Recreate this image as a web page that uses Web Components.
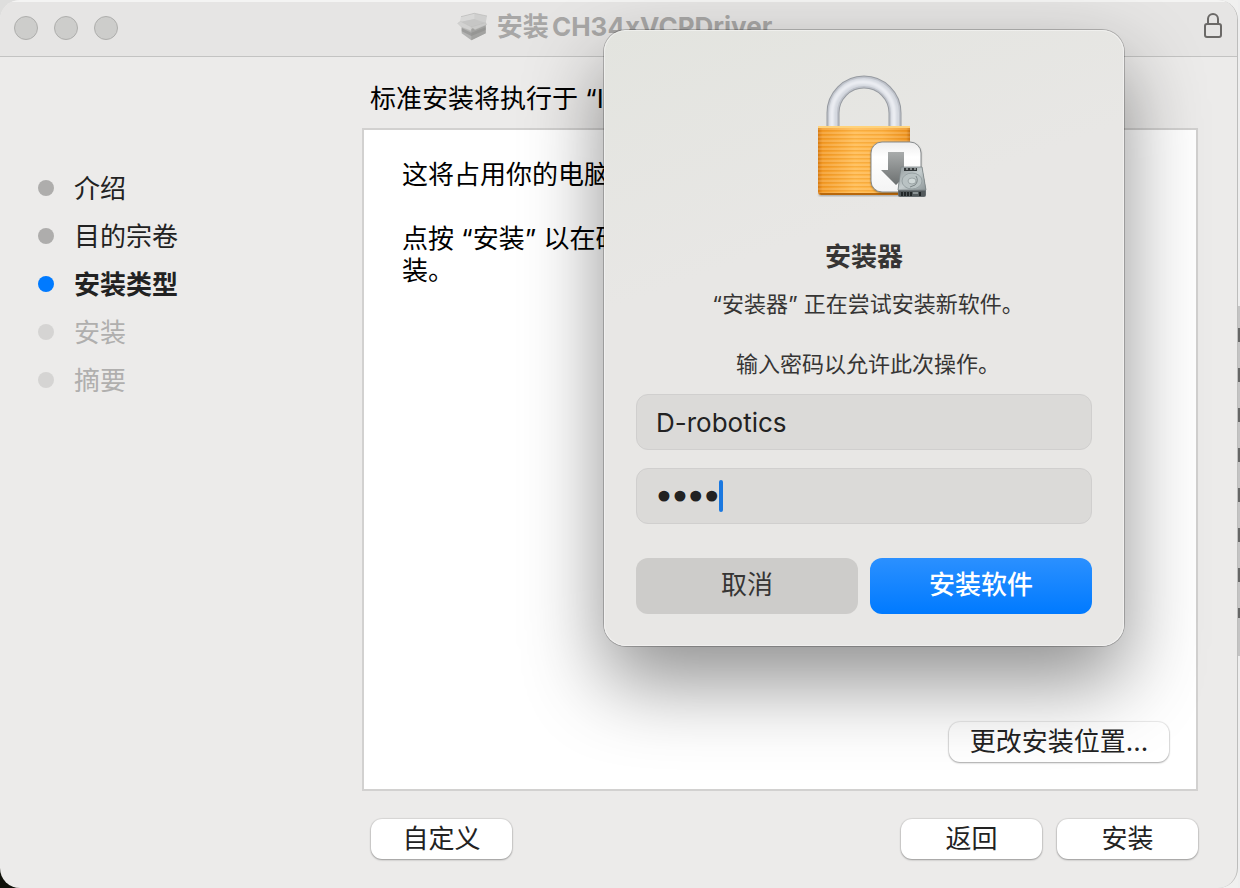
<!DOCTYPE html>
<html lang="zh-CN">
<head>
<meta charset="utf-8">
<meta name="viewport" content="width=device-width, initial-scale=1">
<title>安装 CH34xVCPDriver</title>
<style>
  * { box-sizing: border-box; }
  body {
    margin: 0;
    min-height: 100vh;
    display: flex;
    position: relative;
    overflow: hidden;
    background: #eee;
    font: 26px/32px Inter, "Noto Sans CJK SC", sans-serif;
    color: #222;
  }
  installer-window { flex: 1; }
</style>
</head>
<body>

<installer-window>
  <title-bar slot="title">安装CH34xVCPDriver</title-bar>

  <step-list slot="steps">
    <step-item state="done">介绍</step-item>
    <step-item state="done">目的宗卷</step-item>
    <step-item state="current">安装类型</step-item>
    <step-item>安装</step-item>
    <step-item>摘要</step-item>
  </step-list>

  <install-pane slot="content">
    <span slot="heading">标准安装将执行于 “I</span>
    <p>这将占用你的电脑</p>
    <p>点按 “安装” 以在硬<br>装。</p>
    <push-button slot="action" wide>更改安装位置...</push-button>
  </install-pane>

  <push-button slot="custom">自定义</push-button>
  <push-button slot="nav">返回</push-button>
  <push-button slot="nav">安装</push-button>
</installer-window>

<auth-dialog user="D-robotics" password="1234">
  <padlock-icon slot="icon"></padlock-icon>
  <span slot="title">安装器</span>
  <span slot="message">“安装器” 正在尝试安装新软件。</span>
  <span slot="prompt">输入密码以允许此次操作。</span>
  <span slot="cancel">取消</span>
  <span slot="confirm">安装软件</span>
</auth-dialog>

<script>
class InstallerWindow extends HTMLElement {
  constructor() {
    super();
    this.attachShadow({ mode: "open" }).innerHTML = `
      <style>
        * { box-sizing: border-box; }
        :host {
          display: flex;
          background:
            linear-gradient(#dededd 0 50%, #10110a 50%) 0 0 / 50% 100% no-repeat,
            #f0f0ef;
        }
        .window {
          flex: 1;
          display: flex;
          flex-direction: column;
          background: #ecebea;
          border-radius: 20px;
          overflow: hidden;
          border-right: 1px solid #bdbdbc;
        }
        .body { flex: 1; display: grid; grid-template-columns: 362px 1fr; }
        .main {
          display: flex;
          flex-direction: column;
          padding: 26px 39px 29px 0;
        }
        slot[name=content]::slotted(*) { flex: 1; }
        footer { display: flex; gap: 15px; padding: 28px 0 0 9px; }
        .space { flex: 1; }
        /* sliver of the page behind the window */
        .behind {
          width: 2px;
          background:
            repeating-linear-gradient(#666 0 14px, transparent 14px 40px) 0 328px / 2px 290px no-repeat,
            linear-gradient(#c4c4c4, #c4c4c4) 0 306px / 2px 350px no-repeat,
            #eee;
        }
      </style>
      <div class="window">
        <slot name="title"></slot>
        <div class="body">
          <slot name="steps"></slot>
          <div class="main">
            <slot name="content"></slot>
            <footer>
              <slot name="custom"></slot>
              <div class="space"></div>
              <slot name="nav"></slot>
            </footer>
          </div>
        </div>
      </div>
      <div class="behind"></div>
    `;
  }
}

class TitleBar extends HTMLElement {
  constructor() {
    super();
    this.attachShadow({ mode: "open" }).innerHTML = `
      <style>
        * { box-sizing: border-box; }
        :host {
          display: grid;
          grid-template-columns: 1fr auto 1fr;
          align-items: center;
          box-sizing: border-box;
          height: 57px;
          padding: 0 14px;
          background: linear-gradient(#f4f4f3 0 2px, #e6e5e4 2px);
          border-bottom: 1px solid #c3c3c2;
          text-autospace: normal;
        }
        .lights { display: flex; gap: 16px; }
        .lights button {
          width: 24px;
          height: 24px;
          padding: 0;
          border: 1px solid #aeaeac;
          border-radius: 50%;
          background: #cdcdcb;
        }
        h1 {
          display: flex;
          align-items: center;
          gap: 10px;
          margin: 0;
          padding: 0 8px 2px 0;
          font-size: 26px;
          font-weight: 700;
          color: #a8a7a6;
        }
        .lock { justify-self: end; }
        svg { display: block; }
      </style>
      <div class="lights">
        <button type="button" aria-label="关闭"></button>
        <button type="button" aria-label="最小化"></button>
        <button type="button" aria-label="缩放"></button>
      </div>
      <h1>
        <svg width="30" height="30" viewBox="0 0 90 90" aria-hidden="true">
          <path d="M14 36 43 50 86 36V64L43 85 14 64Z" fill="#b2b2b1"/>
          <path d="M43 50 86 36V64L43 85Z" fill="#a2a2a0"/>
          <path d="M14 48 43 62 86 46V54L43 72 14 58Z" fill="#8e8e8c" opacity=".6"/>
          <path d="M12 14 52 4 90 12 86 34 42 47 10 30Z" fill="#cfcfce"/>
          <path d="M12 14 52 4V22L12 30Z" fill="#d8d8d7"/>
          <path d="M12 14 52 4 90 12" fill="none" stroke="#b9b9b8" stroke-width="2"/>
          <path d="M12 29 52 21 86 33 42 46Z" fill="#c6c6c5"/>
          <path d="M10 28 2 34 14 46 42 56 43 45Z" fill="#d2d2d1" stroke="#bbbbba"/>
          <path d="M43 45 86 32 89 38 54 53Z" fill="#cacac9" stroke="#b5b5b4"/>
        </svg>
        <slot></slot>
      </h1>
      <svg class="lock" width="20" height="32" viewBox="0 0 20 32" fill="none" stroke="#6b6967" stroke-width="2" aria-hidden="true">
        <rect x="2" y="12" width="16" height="13" rx="2"/>
        <path d="M5 12V7a5 5 0 0 1 10 0v5"/>
      </svg>
    `;
  }
}

class StepList extends HTMLElement {
  constructor() {
    super();
    this.attachShadow({ mode: "open" }).innerHTML = `
      <style>
        :host {
          display: flex;
          flex-direction: column;
          padding: 107px 16px 0 38px;
        }
      </style>
      <slot></slot>
    `;
  }
}

class StepItem extends HTMLElement {
  constructor() {
    super();
    this.attachShadow({ mode: "open" }).innerHTML = `
      <style>
        :host {
          display: flex;
          align-items: center;
          gap: 20px;
          height: 48px;
          color: #b0afae;
          --dot: #d5d4d3;
        }
        :host([state=done]) { color: #222; --dot: #aeadac; }
        :host([state=current]) { color: #222; font-weight: 700; --dot: #007aff; }
        i { width: 16px; height: 16px; border-radius: 50%; background: var(--dot); }
        span { padding-top: 2px; }
      </style>
      <i></i><span><slot></slot></span>
    `;
  }
}

class InstallPane extends HTMLElement {
  constructor() {
    super();
    this.attachShadow({ mode: "open" }).innerHTML = `
      <style>
        :host { display: flex; flex-direction: column; color: #000; }
        header { padding: 0 0 13px 8px; white-space: nowrap; }
        .box {
          flex: 1;
          display: flex;
          flex-direction: column;
          padding: 29px 27px 27px 38px;
          background: #fff;
          border: 2px solid #d2d1d0;
        }
        .text { flex: 1; }
        ::slotted(p) { margin: 0 0 32px; }
        .action { align-self: flex-end; }
      </style>
      <header><slot name="heading"></slot></header>
      <div class="box">
        <div class="text"><slot></slot></div>
        <div class="action"><slot name="action"></slot></div>
      </div>
    `;
  }
}

class PushButton extends HTMLElement {
  constructor() {
    super();
    this.attachShadow({ mode: "open" }).innerHTML = `
      <style>
        :host { display: block; }
        button {
          display: block;
          min-width: 141px;
          height: 40px;
          padding: 0 20px 1px;
          border: 0;
          border-radius: 11px;
          background: #fff;
          box-shadow: 0 0 1px 1px rgba(0, 0, 0, .08), 0 1px 2px rgba(0, 0, 0, .3);
          font: inherit;
          color: #222;
        }
        :host([wide]) button { min-width: 220px; }
      </style>
      <button type="button"><slot></slot></button>
    `;
  }
}

class PadlockIcon extends HTMLElement {
  constructor() {
    super();
    this.attachShadow({ mode: "open" }).innerHTML = `
      <style>
        :host { display: block; }
        svg { display: block; }
      </style>
      <svg width="128" height="128" viewBox="0 0 128 128" aria-hidden="true">
        <defs>
          <linearGradient id="body">
            <stop offset="0" stop-color="#d77a10"/>
            <stop offset=".05" stop-color="#f39a25"/>
            <stop offset=".4" stop-color="#ffb94d"/>
            <stop offset=".7" stop-color="#fdb142"/>
            <stop offset=".96" stop-color="#ee9521"/>
            <stop offset="1" stop-color="#c8720f"/>
          </linearGradient>
          <pattern id="lines" width="4" height="4" patternUnits="userSpaceOnUse">
            <rect width="4" height="2" fill="#fff" opacity=".14"/>
            <rect y="2" width="4" height="1" fill="#d67c0c" opacity=".18"/>
          </pattern>
          <linearGradient id="arrow" x2="0" y2="1">
            <stop offset="0" stop-color="#a9acac"/>
            <stop offset="1" stop-color="#6c7070"/>
          </linearGradient>
          <linearGradient id="tile" x2="0" y2="1">
            <stop offset="0" stop-color="#ededed"/>
            <stop offset=".3" stop-color="#fff"/>
            <stop offset="1" stop-color="#f4f4f4"/>
          </linearGradient>
          <linearGradient id="disk" x2="1" y2="1">
            <stop offset="0" stop-color="#929a9c"/>
            <stop offset=".5" stop-color="#c4cccd"/>
            <stop offset="1" stop-color="#8d9698"/>
          </linearGradient>
          <filter id="soft" x="-20%" y="-20%" width="140%" height="140%">
            <feGaussianBlur stdDeviation="1"/>
          </filter>
        </defs>

        <!-- shackle -->
        <g fill="none">
          <path d="M33 56V41a31 31 0 0 1 62 0V56" stroke="#979ba1" stroke-width="13"/>
          <path d="M33 56V41a31 31 0 0 1 62 0V56" stroke="#bfc3cb" stroke-width="11"/>
          <path d="M33 56V41a31 31 0 0 1 62 0V56" stroke="#d4d8df" stroke-width="8"/>
          <path d="M32 56V41a31 31 0 0 1 62 0V56" stroke="#eceef3" stroke-width="4" filter="url(#soft)"/>
        </g>

        <!-- body -->
        <rect x="19" y="121" width="90" height="3" fill="#000" opacity=".3" filter="url(#soft)"/>
        <path d="M18 54h92v66q0 3-3 3H21q-3 0-3-3Z" fill="url(#body)"/>
        <path d="M18 54h92v66q0 3-3 3H21q-3 0-3-3Z" fill="url(#lines)"/>
        <path d="M18 54h92v2H18Z" fill="#ffd27a"/>
        <path d="M19 121h90l-2 2H21Z" fill="#b9680b"/>

        <!-- download tile -->
        <rect x="71" y="71" width="50" height="50" rx="11" fill="#000" opacity=".4" filter="url(#soft)"/>
        <rect x="71" y="70" width="50" height="50" rx="11" fill="url(#tile)" stroke="#878b8d"/>
        <path d="M88 80h16v18h7L96 113 81 98h7Z" fill="url(#arrow)"/>

        <!-- hard disk -->
        <path d="M101 95h21l4 22v6q0 2-2 2H100q-2 0-2-2v-6Z" fill="#646b6e"/>
        <path d="M101 95h21l4 23H98Z" fill="url(#disk)" stroke="#7e8688" stroke-width=".8"/>
        <rect x="104" y="96" width="13" height="3" fill="#33383a"/>
        <path d="M106 97h2m2 0h2m2 0h2" stroke="#d7dada"/>
        <ellipse cx="112" cy="109" rx="10" ry="8" fill="#b9c2c3" stroke="#98a2a4"/>
        <ellipse cx="112" cy="109" rx="4" ry="3" fill="#d0d8d8" stroke="#9ca5a6"/>
        <path d="M116 104q3 5-1 9l-5 2" fill="none" stroke="#7d8688"/>
        <path d="M99 119h26v5H99Z" fill="#535a5c"/>
        <path d="M102 120v4m3-4v4m3-4v4m3-4v4m9-4v4" stroke="#222728" stroke-width="2"/>
        <path d="M113 121h5" stroke="#c4cccc"/>
      </svg>
    `;
  }
}

class AuthDialog extends HTMLElement {
  constructor() {
    super();
    this.attachShadow({ mode: "open" }).innerHTML = `
      <style>
        * { box-sizing: border-box; }
        :host {
          position: absolute;
          top: 30px;
          left: 604px;
          box-sizing: border-box;
          width: 520px;
          padding: 42px 32px 32px;
          border-radius: 22px;
          background: linear-gradient(160deg, #e3e4df, #e8e7e5 35%);
          box-shadow: inset 0 0 0 1px rgba(255, 255, 255, .4), 0 0 0 1px rgba(0, 0, 0, .22), 0 36px 80px rgba(0, 0, 0, .44);
          color: #363534;
          text-align: center;
        }
        form { display: flex; flex-direction: column; }
        .icon { align-self: center; }
        h2 { margin: 41px 0 16px; font-size: 26px; font-weight: 700; }
        p { margin: 0 0 30px; padding-left: 8px; font-size: 22px; line-height: 30px; }
        .prompt { margin-bottom: 15px; }
        .fields { display: flex; flex-direction: column; gap: 18px; }
        .field { position: relative; }
        input {
          display: block;
          width: 100%;
          height: 56px;
          padding: 0 19px;
          border: 1px solid #d0cfce;
          border-radius: 12px;
          outline: 0;
          background: #dbdad8;
          font: inherit;
          color: #222;
        }
        #password {
          font-family: "DejaVu Sans", sans-serif;
          font-size: 27px;
          -webkit-text-stroke: 3px #222;
        }
        .caret {
          position: absolute;
          top: 12px;
          left: 83px;
          width: 4px;
          height: 32px;
          border-radius: 2px;
          background: #1a78e0;
        }
        .buttons { display: flex; gap: 12px; margin-top: 34px; }
        button {
          flex: 1;
          height: 56px;
          padding: 0 0 2px;
          border: 0;
          border-radius: 12px;
          background: #cdccca;
          font: inherit;
          color: #363534;
        }
        .confirm {
          background: linear-gradient(#2b90ff, #007aff);
          font-weight: 500;
          color: #fff;
        }
      </style>
      <form role="dialog" aria-labelledby="title">
        <div class="icon"><slot name="icon"></slot></div>
        <h2 id="title"><slot name="title"></slot></h2>
        <p><slot name="message"></slot></p>
        <p class="prompt"><slot name="prompt"></slot></p>
        <div class="fields">
          <div class="field"><input id="user" type="text" aria-label="用户名"></div>
          <div class="field">
            <input id="password" type="password" aria-label="密码">
            <div class="caret"></div>
          </div>
        </div>
        <div class="buttons">
          <button type="button"><slot name="cancel"></slot></button>
          <button type="button" class="confirm"><slot name="confirm"></slot></button>
        </div>
      </form>
    `;
  }

  connectedCallback() {
    this.shadowRoot.getElementById("user").value = this.getAttribute("user");
    this.shadowRoot.getElementById("password").value = this.getAttribute("password");
  }
}

window.customElements.define("installer-window", InstallerWindow);
window.customElements.define("title-bar", TitleBar);
window.customElements.define("step-list", StepList);
window.customElements.define("step-item", StepItem);
window.customElements.define("install-pane", InstallPane);
window.customElements.define("push-button", PushButton);
window.customElements.define("padlock-icon", PadlockIcon);
window.customElements.define("auth-dialog", AuthDialog);
</script>
</body>
</html>
